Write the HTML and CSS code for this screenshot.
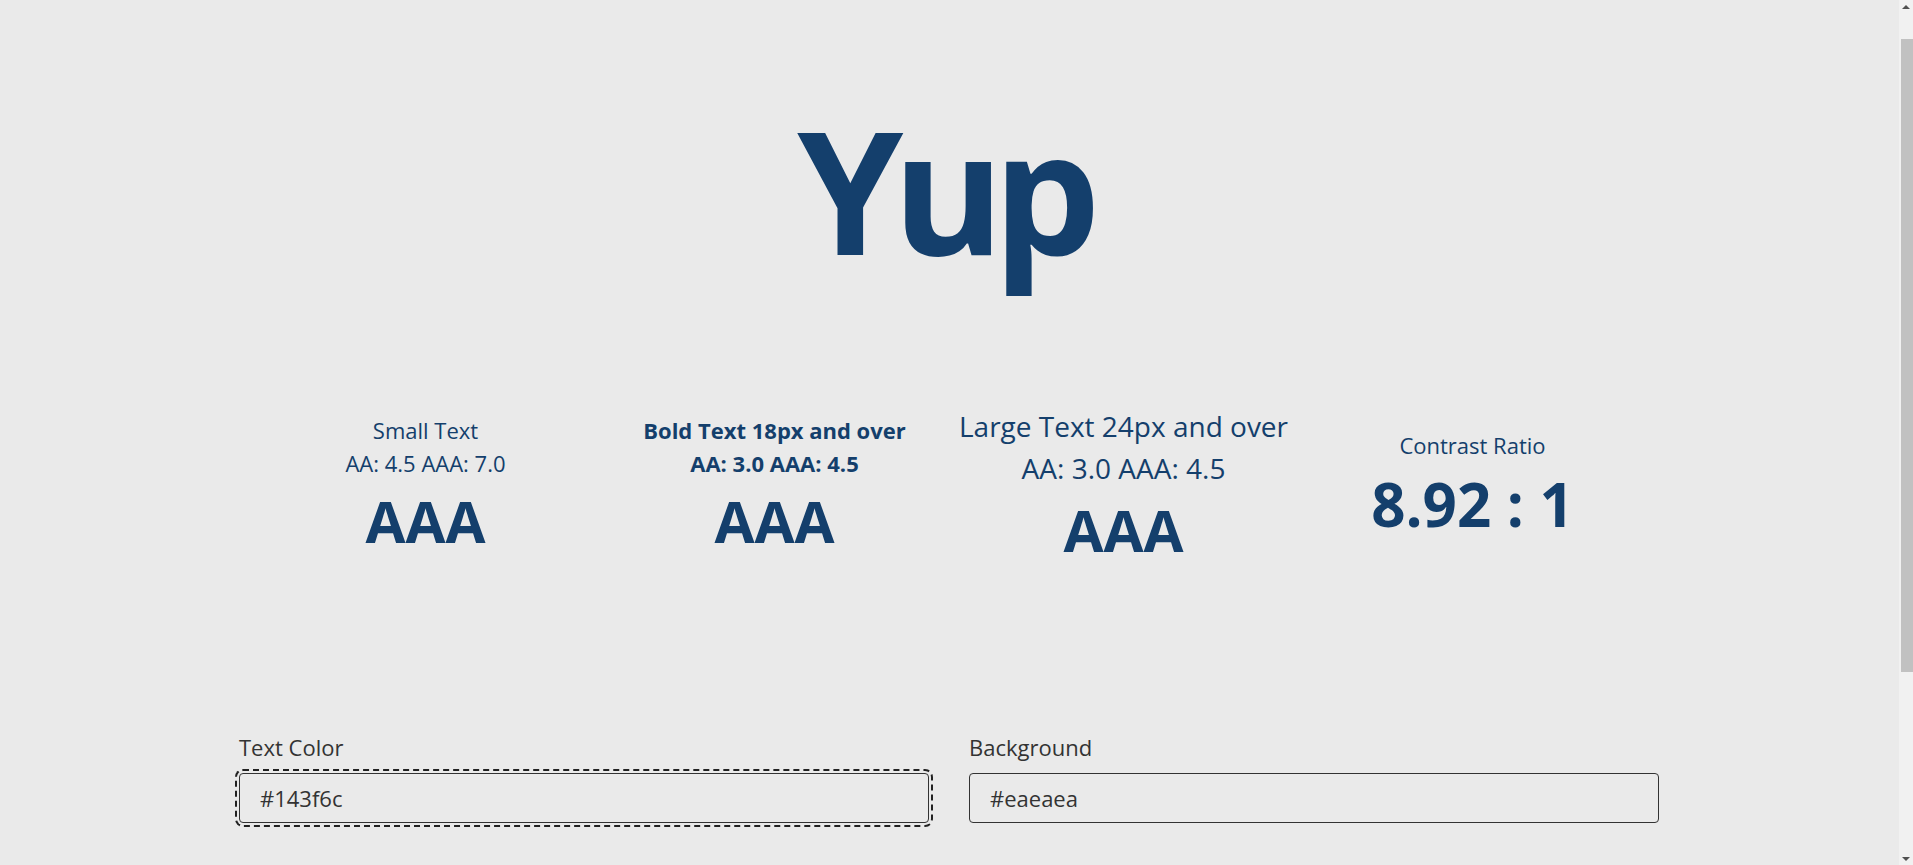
FILE: index.html
```html
<!DOCTYPE html>
<html lang="en">
<head>
<meta charset="utf-8">
<title>Yup – Contrast Checker</title>
<link rel="stylesheet" href="styles.css">
</head>
<body>
<main class="page">
  <h1 class="title">Yup</h1>

  <section class="stats">
    <div class="stat">
      <p class="stat-line">Small Text</p>
      <p class="stat-line">AA: 4.5 AAA: 7.0</p>
      <p class="grade">AAA</p>
    </div>
    <div class="stat stat--bold">
      <p class="stat-line">Bold Text 18px and over</p>
      <p class="stat-line">AA: 3.0 AAA: 4.5</p>
      <p class="grade">AAA</p>
    </div>
    <div class="stat stat--large">
      <p class="stat-line">Large Text 24px and over</p>
      <p class="stat-line">AA: 3.0 AAA: 4.5</p>
      <p class="grade">AAA</p>
    </div>
    <div class="stat">
      <p class="stat-line">Contrast Ratio</p>
      <p class="ratio">8.92 : 1</p>
    </div>
  </section>

  <section class="fields">
    <label class="field">
      <span class="field-label">Text Color</span>
      <input class="field-input is-focused" type="text" value="#143f6c">
    </label>
    <label class="field">
      <span class="field-label">Background</span>
      <input class="field-input" type="text" value="#eaeaea">
    </label>
  </section>
</main>

<div class="scrollbar" aria-hidden="true">
  <div class="scrollbar-btn"><span class="arrow arrow--up"></span></div>
  <div class="scrollbar-track"><div class="scrollbar-thumb"></div></div>
  <div class="scrollbar-btn"><span class="arrow arrow--down"></span></div>
</div>
</body>
</html>
```

FILE: styles.css
```css
html, body {
  margin: 0;
  padding: 0;
}

body {
  background: #eaeaea;
  color: #143f6c;
  font-family: "Open Sans", "Noto Sans", sans-serif;
  padding-right: 15px;
}

.page {
  width: 1420px;
  margin: 0 auto;
  padding: 104px 0 312px;
}

.title {
  margin: 0;
  font-size: 170px;
  line-height: 1;
  font-weight: 700;
  text-align: center;
  letter-spacing: -0.065em;
  text-indent: -0.065em;
}

.stats {
  margin-top: 131px;
  padding: 0 12px;
  display: grid;
  grid-template-columns: repeat(4, 1fr);
  align-items: center;
  text-align: center;
}

.stat p {
  margin: 0;
}

.stat-line {
  font-size: 22px;
  line-height: 33px;
}

.stat--bold .stat-line {
  font-weight: 700;
}

.stat--large .stat-line {
  font-size: 28px;
  line-height: 42px;
}

.grade {
  font-size: 58px;
  line-height: 81px;
  font-weight: 700;
}

.ratio {
  font-size: 60px;
  line-height: 84px;
  font-weight: 700;
}

.fields {
  margin-top: 161px;
  display: grid;
  grid-template-columns: 1fr 1fr;
  gap: 40px;
}

.field {
  display: flex;
  flex-direction: column;
  gap: 9px;
}

.field-label {
  font-size: 22px;
  line-height: 33px;
  color: #333;
}

.field-input {
  box-sizing: border-box;
  height: 50px;
  padding: 0 20px;
  border: 1px solid #333;
  border-radius: 4px;
  background: transparent;
  color: #333;
  font-family: inherit;
  font-size: 22px;
}

.field-input.is-focused {
  outline: 2px dashed #222;
  outline-offset: 2px;
}

/* window scrollbar drawn over the page edge */
.scrollbar {
  position: fixed;
  top: 0;
  right: 0;
  width: 14px;
  height: 100vh;
  background: #f1f1f1;
  display: flex;
  flex-direction: column;
}

.scrollbar-btn {
  height: 17px;
  display: flex;
  align-items: center;
  justify-content: center;
}

.arrow {
  width: 0;
  height: 0;
  border-left: 4px solid transparent;
  border-right: 4px solid transparent;
}

.arrow--up {
  border-bottom: 4px solid #505050;
  margin-top: -4px;
}

.arrow--down {
  border-top: 4px solid #505050;
  margin-bottom: -4px;
}

.scrollbar-track {
  flex: 1;
  padding-top: 22px;
}

.scrollbar-thumb {
  height: 633px;
  margin-left: 2px;
  background: #c1c1c1;
}
```
